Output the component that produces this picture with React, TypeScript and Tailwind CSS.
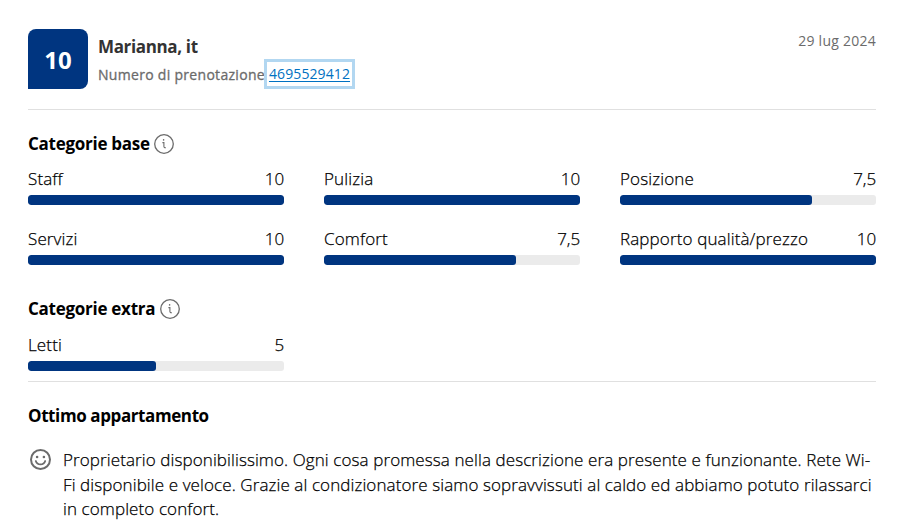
interface Score {
  label: string;
  value: number;
}

const baseScores: Score[] = [
  { label: "Staff", value: 10 },
  { label: "Pulizia", value: 10 },
  { label: "Posizione", value: 7.5 },
  { label: "Servizi", value: 10 },
  { label: "Comfort", value: 7.5 },
  { label: "Rapporto qualità/prezzo", value: 10 },
];

const extraScores: Score[] = [{ label: "Letti", value: 5 }];

const InfoIcon = () => (
  <svg className="size-5" viewBox="0 0 20 20" fill="none" stroke="#6b6b6b">
    <circle cx="10" cy="10" r="9.3" strokeWidth="1.3" />
    <path d="M8.4 8.6H9.9V12.6Q9.9 13.9 11.9 13.7" strokeWidth="1.1" />
    <circle cx="9.6" cy="5.9" r="0.8" fill="#6b6b6b" stroke="none" />
  </svg>
);

const SmileIcon = () => (
  <svg className="mt-px size-[21px] shrink-0" viewBox="0 0 21 21" fill="none" stroke="#6b6b6b">
    <circle cx="10.5" cy="10.5" r="9.5" strokeWidth="2" />
    <path d="M5.8 12C7.2 16.6 13.8 16.6 15.2 12" strokeWidth="1.8" strokeLinecap="round" />
    <circle cx="7.1" cy="8" r="1.3" fill="#6b6b6b" stroke="none" />
    <circle cx="13.9" cy="8" r="1.3" fill="#6b6b6b" stroke="none" />
  </svg>
);

const ScoreBar = ({ label, value }: Score) => (
  <div className="w-64">
    <div className="flex h-6 items-center justify-between text-[17px] leading-6 [-webkit-text-stroke:0.25px]">
      <span className="tracking-[0.13px]">{label}</span>
      <span className="tracking-[-0.1px]">{value.toLocaleString("it")}</span>
    </div>
    <div className="mt-1 h-2.5 overflow-hidden rounded-[3px] bg-[#ebebeb]">
      <div className="h-full rounded-[3px] bg-[#003580]" style={{ width: `${value * 10}%` }} />
    </div>
  </div>
);

export default function App() {
  return (
    <div className="h-[521px] w-[902px] overflow-hidden bg-white pr-[26px] pl-7 font-['Open_Sans','Noto_Sans',sans-serif] font-light text-black">
      <header className="flex h-[110px] items-start border-b border-[#e0e0e0] pt-[29px]">
        <div className="flex size-[60px] items-center justify-center rounded-lg rounded-bl-none bg-[#003580] pt-0.5 text-2xl font-bold text-white">
          10
        </div>
        <div className="ml-2.5 flex-1">
          <div className="h-[30px] pt-1.5 text-[17px] leading-6 font-bold tracking-[-0.35px] text-[#333]">Marianna, it</div>
          <div className="flex h-[30px] items-center text-sm leading-5 whitespace-nowrap text-[#6b6b6b]">
            <span className="w-[166px] pt-px font-normal tracking-[0.3px] [-webkit-text-stroke:0.3px]">Numero di prenotazione</span>
            <a href="#" className="flex h-[30px] w-[91px] items-center justify-center border-3 border-[#b2d7f1] font-normal tracking-[0.1px] text-[#0071c2] underline underline-offset-2">
              4695529412
            </a>
          </div>
        </div>
        <div className="pt-0.5 text-sm leading-5 font-normal tracking-[0.25px] text-[#6b6b6b]">29 lug 2024</div>
      </header>

      <section className="h-[155px] pt-[22px]">
        <div className="flex h-6 items-center gap-1 text-[17px] font-bold tracking-[-0.27px]">
          <h2>Categorie base</h2>
          <InfoIcon />
        </div>
        <div className="mt-[11px] grid grid-cols-3 gap-x-10 gap-y-[22px]">
          {baseScores.map((score) => (
            <ScoreBar key={score.label} {...score} />
          ))}
        </div>
      </section>

      <section className="h-[117px] border-b border-[#e0e0e0] pt-8">
        <div className="flex h-6 items-center gap-[5px] text-[17px] font-bold tracking-[-0.27px]">
          <h2>Categorie extra</h2>
          <InfoIcon />
        </div>
        <div className="mt-3">
          {extraScores.map((score) => (
            <ScoreBar key={score.label} {...score} />
          ))}
        </div>
      </section>

      <section className="pt-[22px]">
        <h2 className="text-[17px] leading-6 font-bold tracking-[-0.4px]">Ottimo appartamento</h2>
        <div className="mt-5 flex gap-3 pl-0.5">
          <SmileIcon />
          <p className="text-[17px] leading-[24.5px] tracking-[0.1px] whitespace-nowrap [-webkit-text-stroke:0.25px]">
            Proprietario disponibilissimo. Ogni cosa promessa nella descrizione era presente e funzionante. Rete Wi-
            <br />
            Fi disponibile e veloce. Grazie al condizionatore siamo sopravvissuti al caldo ed abbiamo potuto rilassarci
            <br />
            in completo confort.
          </p>
        </div>
      </section>
    </div>
  );
}
